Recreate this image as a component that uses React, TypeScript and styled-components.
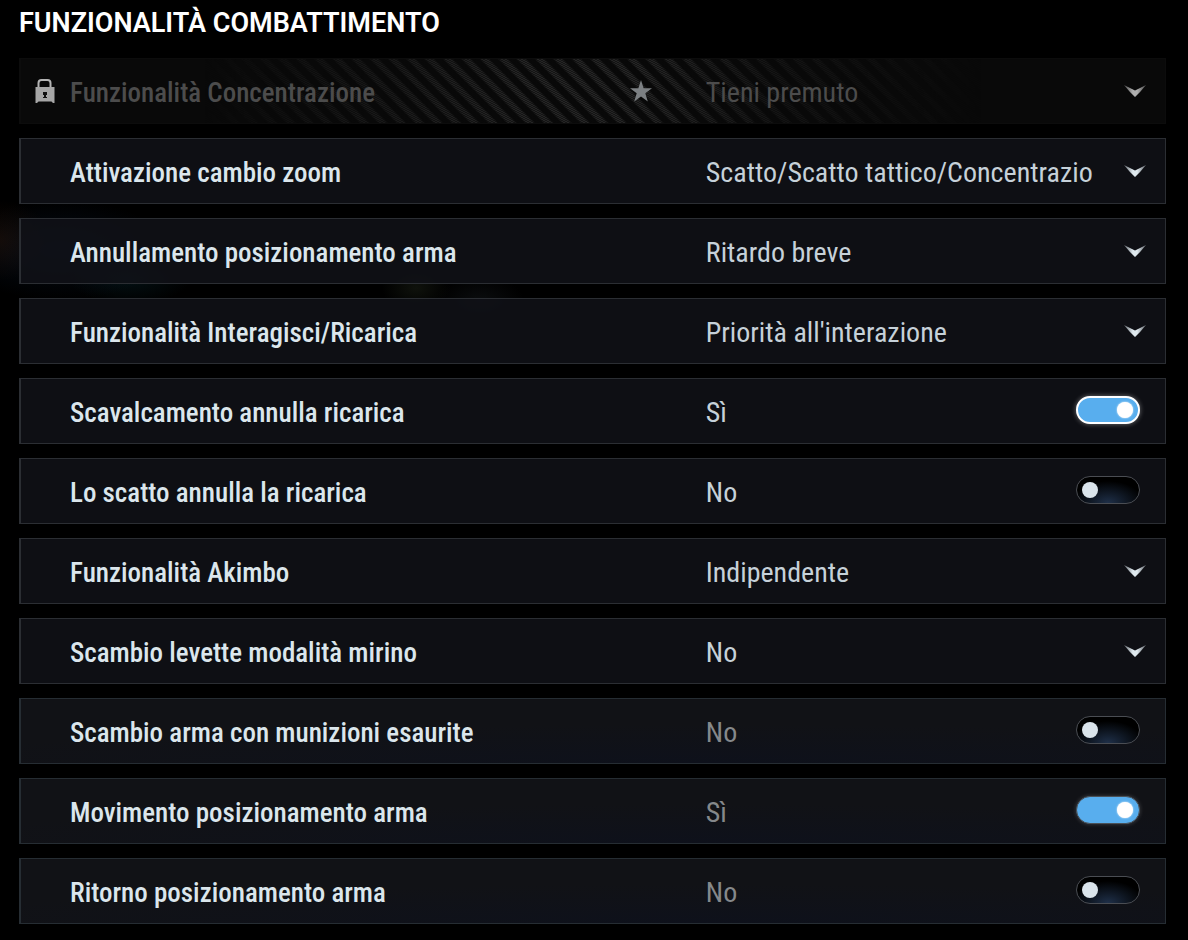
import React, { useId, useState } from "react";
import styled, { createGlobalStyle, css } from "styled-components";

const GlobalStyle = createGlobalStyle`
  * { box-sizing: border-box; }
  body {
    margin: 0;
    min-height: 100vh;
    background:
      radial-gradient(50px 40px at 0 240px, rgba(90, 40, 10, 0.2), transparent),
      radial-gradient(110px 50px at 60px 250px, rgba(20, 50, 90, 0.25), transparent),
      radial-gradient(60px 24px at 130px 280px, rgba(10, 50, 60, 0.3), transparent),
      radial-gradient(34px 22px at 416px 288px, rgba(50, 60, 40, 0.3), transparent),
      radial-gradient(44px 24px at 480px 300px, rgba(30, 36, 40, 0.35), transparent),
      #000;
    font-family: "Roboto Condensed", Roboto, "Liberation Sans", sans-serif;
  }
`;

const Page = styled.main`
  padding: 0 22px 16px 19px;
`;

const Heading = styled.h1`
  margin: 0 0 12px;
  color: #fff;
  font: 600 27px/46px Roboto, "Liberation Sans", sans-serif;
`;

const List = styled.div`
  display: flex;
  flex-direction: column;
  gap: 14px;
`;

type Tone = "plain" | "low" | "locked";

const Row = styled.div<{ $tone: Tone }>`
  display: grid;
  grid-template-columns: minmax(0, 3fr) minmax(0, 2fr);
  height: 66px;
  padding-right: 6px;
  border: 1px solid #2b2e33;
  border-left-width: 2px;
  background: rgba(17, 18, 24, 0.84);

  ${({ $tone }) =>
    $tone === "low" &&
    css`
      border-color: #262d33;
      background: radial-gradient(70% 60% at 60% 100%, #0e111b, #111216);
    `}

  ${({ $tone }) =>
    $tone === "locked" &&
    css`
      position: relative;
      isolation: isolate;
      border-color: #0c0c0c;
      background: #090909;

      &::before {
        content: "";
        position: absolute;
        inset: 0;
        z-index: -1;
        background:
          repeating-conic-gradient(rgba(9, 9, 9, 0.6) 0 25%, transparent 0 50%) 0 0 / 4px 2px,
          repeating-linear-gradient(45deg, transparent 0 5px, #252525 7px 11px, transparent 13px);
        mask-image: linear-gradient(90deg, transparent 16%, #000 44%, #000 54%, rgba(0, 0, 0, 0.4) 66%, transparent 84%);
      }
    `}
`;

const LabelCell = styled.div`
  display: grid;
  grid-template-columns: 49px minmax(0, 1fr) auto;
  align-items: center;
  padding-right: 51px;
`;

const Label = styled.label<{ $locked: boolean }>`
  grid-column: 2;
  padding-top: 4px;
  color: ${({ $locked }) => ($locked ? "#4c4c4c" : "#dbe6ec")};
  font-size: 27px;
  font-weight: 500;
  line-height: 36px;
  white-space: nowrap;
`;

const ControlCell = styled.div`
  display: grid;
  grid-template-columns: minmax(0, 1fr) auto;
  align-items: center;
`;

const valueText = css<{ $tone: Tone }>`
  color: ${({ $tone }) => ({ plain: "#c6d1d9", low: "#85888b", locked: "#4c4c4c" })[$tone]};
  font-family: inherit;
  font-size: 28px;
  font-weight: 400;
  line-height: 36px;
`;

const Select = styled.select<{ $tone: Tone }>`
  ${valueText}
  grid-area: 1 / 1 / 2 / 3;
  width: 100%;
  height: 64px;
  padding: 4px 64px 0 2px;
  border: 0;
  outline: 0;
  opacity: 1;
  appearance: none;
  background: transparent;

  option { background: #111216; }
`;

const Value = styled.output<{ $tone: Tone }>`
  ${valueText}
  padding: 4px 0 0 2px;
`;

const Chevron = styled.svg`
  grid-area: 1 / 2;
  width: 22px;
  height: 12px;
  margin-right: 13px;
  pointer-events: none;
`;

const Toggle = styled.input<{ $focused: boolean }>`
  appearance: none;
  display: flex;
  align-items: center;
  width: 64px;
  height: 28px;
  margin: 0 19px 2px 0;
  padding: 0 5px;
  border: 1px solid #4a4d53;
  border-radius: 14px;
  outline: 0;
  background: radial-gradient(36px 22px at 50% 100%, #1f3049, #000);

  &::before {
    content: "";
    width: 16px;
    height: 16px;
    border-radius: 50%;
    background: #dae4eb;
  }

  &:checked {
    justify-content: flex-end;
    padding: 0 6px;
    border-color: #4a5158;
    background: #58aeee;
    box-shadow: 0 0 4px rgba(255, 255, 255, 0.2);
  }

  &:checked::before {
    background: #fff;
    box-shadow: 0 0 2px #fff;
  }

  ${({ $focused }) =>
    $focused &&
    css`
      &:checked {
        border: 2px solid #fff;
        padding: 0 5px;
        box-shadow: 0 0 5px rgba(255, 255, 255, 0.4);
      }
    `}
`;

const Lock = styled.svg`
  grid-area: 1 / 1;
  width: 20px;
  height: 24px;
  margin-left: 14px;
`;

const Star = styled.svg`
  width: 24px;
  height: 22px;
`;

const LockIcon = () => (
  <Lock viewBox="0 0 20 24" aria-hidden="true">
    <path d="M3.5 8V4Q3.5 1 6.5 1H12.500Q15.500 1 15.500 4V8" fill="none" stroke="#b4b4b4" strokeWidth="2" />
    <path d="M.5 8H19.500V24H18L16.500 22.500H3.500L2 24H.5Z" fill="#a6a6a6" />
    <path d="M8 13H12V16H11V18H12V19H8V18H9V16H8Z" fill="#101010" />
  </Lock>
);

const StarIcon = () => (
  <Star viewBox="0 0 24 22" aria-hidden="true">
    <path d="M12 0 14.600 8.200H23L16.300 13.200 18.800 21.400 12 16.400 5.200 21.400 7.700 13.200 1 8.200H9.400Z" fill="#7c8083" />
  </Star>
);

const ChevronIcon = ({ locked }: { locked: boolean }) => {
  const fade = useId();
  const color = locked ? "#b0b0b0" : "#dfe9ef";
  return (
    <Chevron viewBox="0 0 22 12" aria-hidden="true">
      <linearGradient id={fade}>
        <stop offset="0" stopColor={color} stopOpacity="0.4" />
        <stop offset="0.4" stopColor={color} />
        <stop offset="0.6" stopColor={color} />
        <stop offset="1" stopColor={color} stopOpacity="0.4" />
      </linearGradient>
      <path d="M0 0 11 5.500 22 0 16.500 6.500 11 12 5.500 6.500Z" fill={`url(#${fade})`} />
    </Chevron>
  );
};

type Setting = {
  label: string;
  value: string | boolean;
  tone?: Tone;
  focused?: boolean;
};

const settings: Setting[] = [
  { label: "Funzionalità Concentrazione", value: "Tieni premuto", tone: "locked" },
  { label: "Attivazione cambio zoom", value: "Scatto/Scatto tattico/Concentrazio" },
  { label: "Annullamento posizionamento arma", value: "Ritardo breve" },
  { label: "Funzionalità Interagisci/Ricarica", value: "Priorità all'interazione" },
  { label: "Scavalcamento annulla ricarica", value: true, focused: true },
  { label: "Lo scatto annulla la ricarica", value: false },
  { label: "Funzionalità Akimbo", value: "Indipendente" },
  { label: "Scambio levette modalità mirino", value: "No" },
  { label: "Scambio arma con munizioni esaurite", value: false, tone: "low" },
  { label: "Movimento posizionamento arma", value: true, tone: "low" },
  { label: "Ritorno posizionamento arma", value: false, tone: "low" },
];

function SettingRow({ label, value, tone = "plain", focused = false }: Setting) {
  const id = useId();
  const [on, setOn] = useState(value === true);
  const locked = tone === "locked";

  return (
    <Row $tone={tone}>
      <LabelCell>
        {locked && <LockIcon />}
        <Label htmlFor={id} $locked={locked}>{label}</Label>
        {locked && <StarIcon />}
      </LabelCell>
      <ControlCell>
        {typeof value === "string" ? (
          <>
            <Select id={id} $tone={tone} disabled={locked} defaultValue={value}>
              <option>{value}</option>
            </Select>
            <ChevronIcon locked={locked} />
          </>
        ) : (
          <>
            <Value htmlFor={id} $tone={tone}>{on ? "Sì" : "No"}</Value>
            <Toggle
              id={id}
              type="checkbox"
              role="switch"
              checked={on}
              $focused={focused}
              onChange={(event) => setOn(event.target.checked)}
            />
          </>
        )}
      </ControlCell>
    </Row>
  );
}

export default function App() {
  return (
    <Page>
      <GlobalStyle />
      <Heading>FUNZIONALITÀ COMBATTIMENTO</Heading>
      <List>
        {settings.map((setting) => (
          <SettingRow key={setting.label} {...setting} />
        ))}
      </List>
    </Page>
  );
}
